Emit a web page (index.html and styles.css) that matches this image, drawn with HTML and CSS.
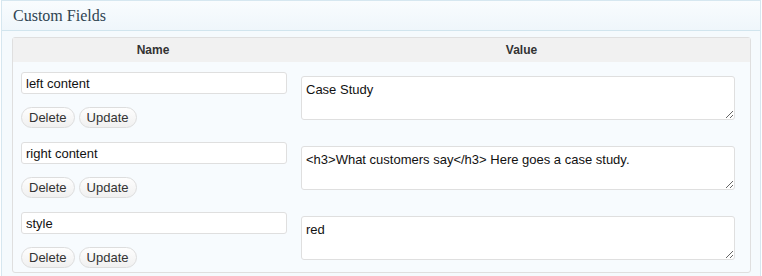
FILE: index.html
```html
<!DOCTYPE html>
<html lang="en">
<head>
    <meta charset="UTF-8">
    <title>Custom Fields</title>
    <link rel="stylesheet" href="styles.css">
</head>
<body>
    <!-- Custom Fields box -->
    <div class="postbox">
        <h3 class="box-title">Custom Fields</h3>
        <div class="inside">
            <div class="meta-list">
                <div class="meta-head">
                    <div>Name</div>
                    <div>Value</div>
                </div>

                <div class="meta-row">
                    <div class="meta-key">
                        <input type="text" value="left content">
                        <div class="meta-buttons">
                            <button class="pill-button">Delete</button>
                            <button class="pill-button">Update</button>
                        </div>
                    </div>
                    <div class="meta-value">
                        <textarea>Case Study</textarea>
                    </div>
                </div>

                <div class="meta-row">
                    <div class="meta-key">
                        <input type="text" value="right content">
                        <div class="meta-buttons">
                            <button class="pill-button">Delete</button>
                            <button class="pill-button">Update</button>
                        </div>
                    </div>
                    <div class="meta-value">
                        <textarea>&lt;h3&gt;What customers say&lt;/h3&gt; Here goes a case study.</textarea>
                    </div>
                </div>

                <div class="meta-row">
                    <div class="meta-key">
                        <input type="text" value="style">
                        <div class="meta-buttons">
                            <button class="pill-button">Delete</button>
                            <button class="pill-button">Update</button>
                        </div>
                    </div>
                    <div class="meta-value">
                        <textarea>red</textarea>
                    </div>
                </div>
            </div>
        </div>
    </div>
</body>
</html>
```

FILE: styles.css
```css
body {
    margin: 0;
    padding: 0;
    background-color: #ffffff;
    font-family: "Liberation Sans", Arial, sans-serif;
    font-size: 13px;
    color: #333333;
}

/* box is cut off at the bottom of the shot, so no bottom border */
.postbox {
    box-sizing: border-box;
    height: 276px;
    margin: 0 1px;
    border: 1px solid #d6e7f0;
    border-bottom: none;
    background-color: #f5fafd;
}

.box-title {
    margin: 0;
    height: 29px;
    line-height: 30px;
    padding: 0 0 0 11px;
    border-bottom: 1px solid #d1e5ee;
    background: linear-gradient(to bottom, #f9fcfe, #eff6fb);
    font-family: "Liberation Serif", "Times New Roman", serif;
    font-weight: normal;
    font-size: 16px;
    color: #2f4452;
}

.inside {
    padding: 6px 9px 0 10px;
}

.meta-list {
    border: 1px solid #dfdfdf;
    border-radius: 3px;
    background-color: #f7fbfe;
}

.meta-head {
    display: grid;
    grid-template-columns: 280px 1fr;
    height: 24px;
    line-height: 25px;
    background-color: #f1f1f1;
    font-weight: bold;
    font-size: 12px;
    color: #333333;
    text-align: center;
}

.meta-row {
    display: grid;
    grid-template-columns: 280px 1fr;
    height: 70px;
}

.meta-key {
    padding: 10px 0 0 8px;
}

.meta-key input {
    display: block;
    box-sizing: border-box;
    width: 266px;
    height: 22px;
    margin: 0;
    padding: 0 4px;
    border: 1px solid #dfdfdf;
    border-radius: 3px;
    background-color: #ffffff;
    font-family: "Liberation Sans", Arial, sans-serif;
    font-size: 13px;
    color: #111111;
}

.meta-buttons {
    display: flex;
    gap: 4px;
    margin-top: 13px;
}

.pill-button {
    height: 21px;
    padding: 0 7px;
    border: 1px solid #dddddd;
    border-radius: 11px;
    background: linear-gradient(to bottom, #fefefe, #f0f0f0);
    font-family: "Liberation Sans", Arial, sans-serif;
    font-size: 13px;
    color: #333333;
    cursor: pointer;
}

.meta-value {
    padding: 14px 0 0 8px;
}

.meta-value textarea {
    display: block;
    box-sizing: border-box;
    width: 434px;
    height: 44px;
    margin: 0;
    padding: 5px 4px 3px;
    border: 1px solid #dfdfdf;
    border-radius: 3px;
    background-color: #ffffff;
    font-family: "Liberation Sans", Arial, sans-serif;
    font-size: 13px;
    color: #111111;
    resize: vertical;
}
```
